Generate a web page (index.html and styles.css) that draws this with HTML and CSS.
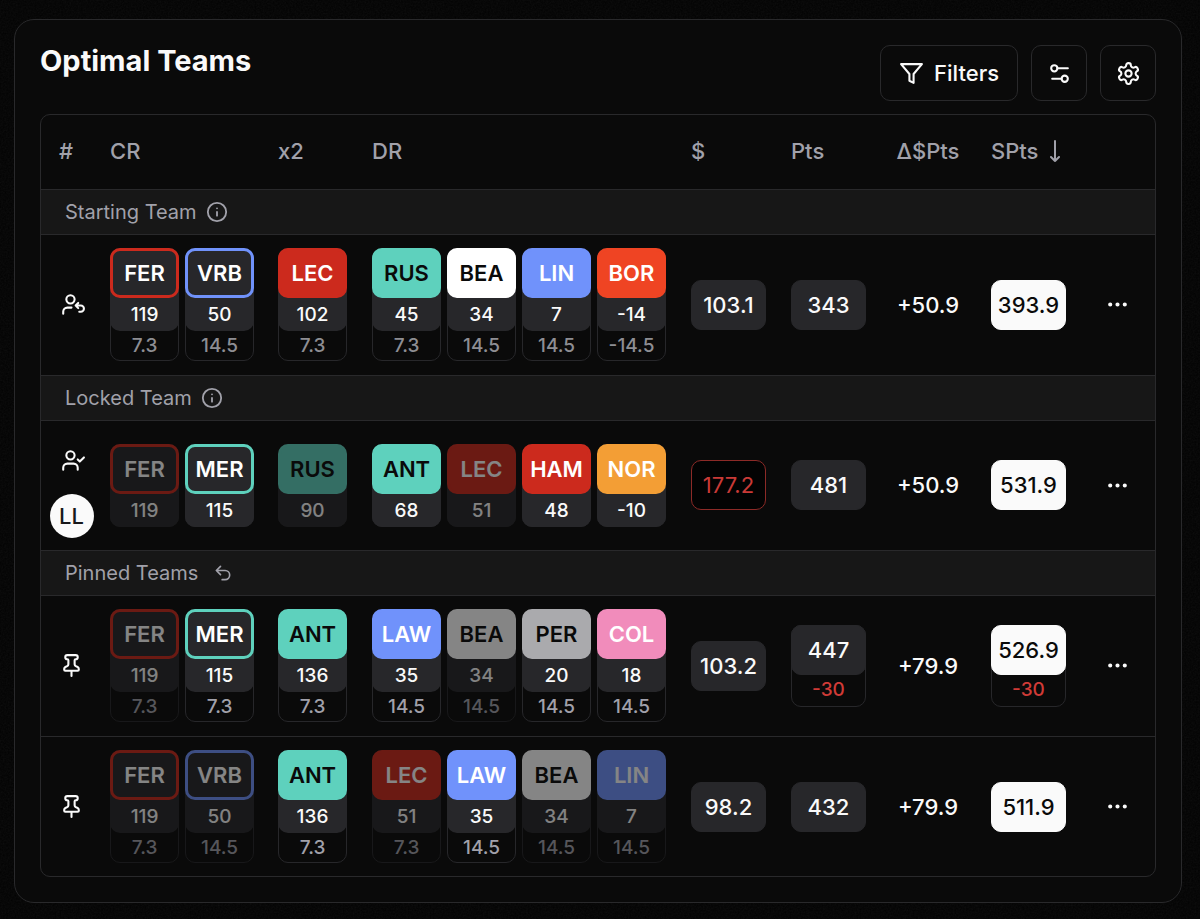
FILE: index.html
```html
<!DOCTYPE html>
<html lang="en">
<head>
    <meta charset="UTF-8">
    <meta name="viewport" content="width=device-width, initial-scale=1.0">
    <title>Optimal Teams</title>
    <link rel="stylesheet" href="styles.css">
</head>
<body>
    <!-- icon set -->
    <svg class="sprite" aria-hidden="true">
        <symbol id="i-filter" viewBox="0 0 24 24"><path d="M22 3H2l8 9.46V19l4 2v-8.54z"/></symbol>
        <symbol id="i-sliders" viewBox="0 0 24 24"><path d="M14 17H5M20 7h-10"/><circle cx="17" cy="17" r="3"/><circle cx="7" cy="7" r="3"/></symbol>
        <symbol id="i-gear" viewBox="0 0 24 24"><path d="M12.22 2h-.44a2 2 0 0 0-2 2v.18a2 2 0 0 1-1 1.73l-.43.25a2 2 0 0 1-2 0l-.15-.08a2 2 0 0 0-2.73.73l-.22.38a2 2 0 0 0 .73 2.73l.15.1a2 2 0 0 1 1 1.72v.51a2 2 0 0 1-1 1.74l-.15.09a2 2 0 0 0-.73 2.73l.22.38a2 2 0 0 0 2.73.73l.15-.08a2 2 0 0 1 2 0l.43.25a2 2 0 0 1 1 1.73V20a2 2 0 0 0 2 2h.44a2 2 0 0 0 2-2v-.18a2 2 0 0 1 1-1.73l.43-.25a2 2 0 0 1 2 0l.15.08a2 2 0 0 0 2.73-.73l.22-.39a2 2 0 0 0-.73-2.73l-.15-.08a2 2 0 0 1-1-1.74v-.5a2 2 0 0 1 1-1.74l.15-.09a2 2 0 0 0 .73-2.73l-.22-.38a2 2 0 0 0-2.73-.73l-.15.08a2 2 0 0 1-2 0l-.43-.25a2 2 0 0 1-1-1.73V4a2 2 0 0 0-2-2z"/><circle cx="12" cy="12" r="3"/></symbol>
        <symbol id="i-info" viewBox="0 0 24 24"><circle cx="12" cy="12" r="10"/><path d="M12 16v-4M12 8h.01"/></symbol>
        <symbol id="i-undo" viewBox="0 0 24 24"><path d="M9 14 4 9l5-5M4 9h10.5a5.5 5.5 0 0 1 0 11H11"/></symbol>
        <symbol id="i-dots" viewBox="0 0 24 24"><circle cx="5" cy="12" r="1"/><circle cx="12" cy="12" r="1"/><circle cx="19" cy="12" r="1"/></symbol>
        <symbol id="i-pin" viewBox="0 0 24 24"><path d="M12 17v5M9 10.76a2 2 0 0 1-1.11 1.79l-1.78.9A2 2 0 0 0 5 15.24V16a1 1 0 0 0 1 1h12a1 1 0 0 0 1-1v-.76a2 2 0 0 0-1.11-1.79l-1.78-.9A2 2 0 0 1 15 10.76V7a1 1 0 0 1 1-1 2 2 0 0 0 0-4H8a2 2 0 0 0 0 4 1 1 0 0 1 1 1z"/></symbol>
        <symbol id="i-user-undo" viewBox="-4 0 28 24"><circle cx="9" cy="7" r="4"/><path d="M2 21v-2a4 4 0 0 1 4-4h4M16.5 10.5 14 13l2.5 2.5M14 13h5a3 3 0 0 1 0 6h-1.5"/></symbol>
        <symbol id="i-user-check" viewBox="-4 0 28 24"><circle cx="9" cy="7" r="4"/><path d="M16 21v-2a4 4 0 0 0-4-4H6a4 4 0 0 0-4 4v2M16 11l2 2 4-4"/></symbol>
        <symbol id="i-down" viewBox="0 0 12 22"><path d="M6 1v20M2 17l4 4 4-4"/></symbol>
    </svg>

    <!-- grain on the page background -->
    <svg class="grain" aria-hidden="true">
        <filter id="noise"><feTurbulence type="fractalNoise" baseFrequency="0.6" numOctaves="2" stitchTiles="stitch"/><feColorMatrix type="saturate" values="0"/></filter>
        <rect width="100%" height="100%" filter="url(#noise)"/>
    </svg>

    <main class="card">
        <header class="card-header">
            <h1>Optimal Teams</h1>
            <div class="actions">
                <button class="btn" type="button"><svg class="icon"><use href="#i-filter"/></svg>Filters</button>
                <button class="btn btn-icon" type="button" aria-label="View options"><svg class="icon"><use href="#i-sliders"/></svg></button>
                <button class="btn btn-icon" type="button" aria-label="Settings"><svg class="icon"><use href="#i-gear"/></svg></button>
            </div>
        </header>

        <div class="table-wrap">
            <table>
                <colgroup>
                    <col class="col-num"><col class="col-cr"><col class="col-x2"><col class="col-dr">
                    <col class="col-stat"><col class="col-stat"><col class="col-stat"><col class="col-stat"><col>
                </colgroup>
                <thead>
                    <tr>
                        <th class="num">#</th>
                        <th>CR</th>
                        <th>x2</th>
                        <th>DR</th>
                        <th>$</th>
                        <th>Pts</th>
                        <th class="center">Δ$Pts</th>
                        <th><span class="sort">SPts <svg class="sort-icon"><use href="#i-down"/></svg></span></th>
                        <th></th>
                    </tr>
                </thead>
                <tbody>
                    <tr class="section">
                        <td colspan="9"><div class="section-label">Starting Team <svg class="info"><use href="#i-info"/></svg></div></td>
                    </tr>
                    <tr class="starting">
                        <td class="who"><div class="who-box"><svg class="icon icon-user"><use href="#i-user-undo"/></svg></div></td>
                        <td>
                            <div class="chips">
                                <div class="chip constructor ferrari"><b>FER</b><span>119</span><small>7.3</small></div>
                                <div class="chip constructor rb"><b>VRB</b><span>50</span><small>14.5</small></div>
                            </div>
                        </td>
                        <td>
                            <div class="chips">
                                <div class="chip ferrari"><b>LEC</b><span>102</span><small>7.3</small></div>
                            </div>
                        </td>
                        <td>
                            <div class="chips">
                                <div class="chip mercedes"><b>RUS</b><span>45</span><small>7.3</small></div>
                                <div class="chip haas"><b>BEA</b><span>34</span><small>14.5</small></div>
                                <div class="chip rb"><b>LIN</b><span>7</span><small>14.5</small></div>
                                <div class="chip audi"><b>BOR</b><span>-14</span><small>-14.5</small></div>
                            </div>
                        </td>
                        <td><div class="stat">103.1</div></td>
                        <td><div class="stat">343</div></td>
                        <td class="center">+50.9</td>
                        <td><div class="stat stat-main">393.9</div></td>
                        <td class="menu"><button class="more" type="button" aria-label="More"><svg class="icon"><use href="#i-dots"/></svg></button></td>
                    </tr>

                    <tr class="section">
                        <td colspan="9"><div class="section-label">Locked Team <svg class="info"><use href="#i-info"/></svg></div></td>
                    </tr>
                    <tr class="locked">
                        <td class="who">
                            <div class="who-box">
                                <svg class="icon icon-user"><use href="#i-user-check"/></svg>
                                <span class="avatar">LL</span>
                            </div>
                        </td>
                        <td>
                            <div class="chips">
                                <div class="chip constructor ferrari dim"><b>FER</b><span>119</span></div>
                                <div class="chip constructor mercedes"><b>MER</b><span>115</span></div>
                            </div>
                        </td>
                        <td>
                            <div class="chips">
                                <div class="chip mercedes dim"><b>RUS</b><span>90</span></div>
                            </div>
                        </td>
                        <td>
                            <div class="chips">
                                <div class="chip mercedes"><b>ANT</b><span>68</span></div>
                                <div class="chip ferrari dim"><b>LEC</b><span>51</span></div>
                                <div class="chip ferrari"><b>HAM</b><span>48</span></div>
                                <div class="chip mclaren"><b>NOR</b><span>-10</span></div>
                            </div>
                        </td>
                        <td><div class="stat stat-over">177.2</div></td>
                        <td><div class="stat">481</div></td>
                        <td class="center">+50.9</td>
                        <td><div class="stat stat-main">531.9</div></td>
                        <td class="menu"><button class="more" type="button" aria-label="More"><svg class="icon"><use href="#i-dots"/></svg></button></td>
                    </tr>

                    <tr class="section">
                        <td colspan="9"><div class="section-label">Pinned Teams <button class="undo" type="button" aria-label="Undo"><svg><use href="#i-undo"/></svg></button></div></td>
                    </tr>
                    <tr>
                        <td class="who"><div class="who-box"><svg class="icon"><use href="#i-pin"/></svg></div></td>
                        <td>
                            <div class="chips">
                                <div class="chip constructor ferrari dim"><b>FER</b><span>119</span><small>7.3</small></div>
                                <div class="chip constructor mercedes"><b>MER</b><span>115</span><small>7.3</small></div>
                            </div>
                        </td>
                        <td>
                            <div class="chips">
                                <div class="chip mercedes"><b>ANT</b><span>136</span><small>7.3</small></div>
                            </div>
                        </td>
                        <td>
                            <div class="chips">
                                <div class="chip rb"><b>LAW</b><span>35</span><small>14.5</small></div>
                                <div class="chip haas dim"><b>BEA</b><span>34</span><small>14.5</small></div>
                                <div class="chip cadillac"><b>PER</b><span>20</span><small>14.5</small></div>
                                <div class="chip alpine"><b>COL</b><span>18</span><small>14.5</small></div>
                            </div>
                        </td>
                        <td><div class="stat">103.2</div></td>
                        <td><div class="penalty"><div class="stat">447</div><small>-30</small></div></td>
                        <td class="center">+79.9</td>
                        <td><div class="penalty"><div class="stat stat-main">526.9</div><small>-30</small></div></td>
                        <td class="menu"><button class="more" type="button" aria-label="More"><svg class="icon"><use href="#i-dots"/></svg></button></td>
                    </tr>
                    <tr>
                        <td class="who"><div class="who-box"><svg class="icon"><use href="#i-pin"/></svg></div></td>
                        <td>
                            <div class="chips">
                                <div class="chip constructor ferrari dim"><b>FER</b><span>119</span><small>7.3</small></div>
                                <div class="chip constructor rb dim"><b>VRB</b><span>50</span><small>14.5</small></div>
                            </div>
                        </td>
                        <td>
                            <div class="chips">
                                <div class="chip mercedes"><b>ANT</b><span>136</span><small>7.3</small></div>
                            </div>
                        </td>
                        <td>
                            <div class="chips">
                                <div class="chip ferrari dim"><b>LEC</b><span>51</span><small>7.3</small></div>
                                <div class="chip rb"><b>LAW</b><span>35</span><small>14.5</small></div>
                                <div class="chip haas dim"><b>BEA</b><span>34</span><small>14.5</small></div>
                                <div class="chip rb dim"><b>LIN</b><span>7</span><small>14.5</small></div>
                            </div>
                        </td>
                        <td><div class="stat">98.2</div></td>
                        <td><div class="stat">432</div></td>
                        <td class="center">+79.9</td>
                        <td><div class="stat stat-main">511.9</div></td>
                        <td class="menu"><button class="more" type="button" aria-label="More"><svg class="icon"><use href="#i-dots"/></svg></button></td>
                    </tr>
                </tbody>
            </table>
        </div>
    </main>
</body>
</html>
```
FILE: styles.css
```css
* {
    box-sizing: border-box;
}

body {
    margin: 0;
    padding: 19px 18px 16px 14px;
    background: #030303;
    color: #fafafa;
    font-family: Inter, "Liberation Sans", sans-serif;
    font-size: 22px;
    font-weight: 500;
    line-height: 32px;
}

button {
    font: inherit;
    color: inherit;
    background: none;
    border: 0;
    padding: 0;
    cursor: pointer;
}

svg {
    display: block;
    fill: none;
    stroke: currentColor;
    stroke-width: 2;
    stroke-linecap: round;
    stroke-linejoin: round;
    flex-shrink: 0;
}

.sprite {
    position: absolute;
    width: 0;
    height: 0;
}

.grain {
    position: fixed;
    top: 0;
    left: 0;
    width: 100%;
    height: 100%;
    opacity: 0.06;
    z-index: -1;
}

.icon {
    width: 25px;
    height: 25px;
}

.icon-user {
    width: 29px;
}

.card {
    background: #0a0a0a;
    border: 1px solid #29292b;
    border-radius: 20px;
    padding: 25px;
}

.card-header {
    display: flex;
    justify-content: space-between;
    align-items: flex-start;
    margin-bottom: 13px;
}

h1 {
    margin: 0;
    font-size: 29px;
    font-weight: 700;
    line-height: 32px;
}

.actions {
    display: flex;
    gap: 13px;
}

.btn {
    display: flex;
    align-items: center;
    justify-content: center;
    gap: 10px;
    height: 56px;
    padding: 0 18px;
    border: 1px solid #29292b;
    border-radius: 10px;
}

.btn-icon {
    width: 56px;
    padding: 0;
}

/* table */
.table-wrap {
    border: 1px solid #29292b;
    border-radius: 10px;
    overflow-x: auto;
}

table {
    width: 100%;
    table-layout: fixed;
    border-collapse: separate;
    border-spacing: 0;
}

.col-num { width: 57px; }
.col-cr { width: 168px; }
.col-x2 { width: 94px; }
.col-dr { width: 319px; }
.col-stat { width: 100px; }

th {
    height: 75px;
    padding: 0 12px 2px;
    text-align: left;
    font-weight: 500;
    color: #a1a1aa;
    border-bottom: 1px solid #29292b;
}

th.num {
    padding-left: 18px;
}

td {
    padding: 13px 12px 14px;
    border-bottom: 1px solid #29292b;
}

tr:last-child td {
    padding-bottom: 13px;
    border-bottom: 0;
}

.center {
    padding-left: 6px;
    padding-right: 8px;
    text-align: center;
}

.section td {
    height: 45px;
    padding: 0 24px;
    background: #171717;
    color: #a1a1aa;
    font-size: 20px;
    font-weight: 400;
}

.section-label {
    display: flex;
    align-items: center;
    gap: 9px;
}

.info {
    width: 22px;
    height: 22px;
}

.undo {
    padding: 0 6px;
}

.undo svg {
    width: 20px;
    height: 20px;
}

.sort {
    display: flex;
    align-items: center;
    gap: 11px;
}

.sort-icon {
    width: 12px;
    height: 22px;
}

td.who {
    padding-left: 6px;
    padding-right: 2px;
}

.who-box {
    display: flex;
    flex-direction: column;
    align-items: center;
    gap: 21px;
}

.locked td {
    height: 130px;
}

.locked td.who {
    padding-top: 20px;
    padding-bottom: 6px;
}

.avatar {
    width: 44px;
    border-radius: 50%;
    background: #fafafa;
    color: #18181b;
    line-height: 44px;
    text-align: center;
}

td.menu {
    padding-left: 0;
    padding-right: 0;
}

.more {
    display: block;
    margin: 0 auto;
}

/* driver and constructor chips */
.chips {
    display: flex;
    gap: 6px;
}

.chip {
    --team: #fff;
    --ink: #fff;
    width: 69px;
    border-radius: 10px;
    border: 1px solid #27272a;
    text-align: center;
    font-size: 19px;
}

.chip b {
    display: block;
    position: relative;
    height: 50px;
    margin: -1px -1px 0;
    border: 3px solid var(--team);
    border-radius: 10px;
    background: var(--team);
    color: var(--ink);
    font-size: 22px;
    font-weight: 600;
    line-height: 44px;
}

.chip span {
    display: block;
    margin: -10px -1px 0;
    padding: 11px 0 0;
    border-radius: 0 0 10px 10px;
    background: #27272a;
}

.chip span:last-child {
    margin-bottom: -1px;
}

.chip small {
    display: block;
    font-size: 19px;
    line-height: 29px;
    color: #a1a1aa;
}

.starting small {
    color: #8e8e93;
}

.chip.constructor b {
    background: #27272a;
    color: #fff;
}

.dim {
    opacity: 0.5;
}

.chip.ferrari { --team: #cc2a1d; }
.chip.rb { --team: #7092fb; }
.chip.mercedes { --team: #5ed1bd; --ink: #0a0a0a; }
.chip.haas { --team: #fff; --ink: #0a0a0a; }
.chip.audi { --team: #ef4423; }
.chip.mclaren { --team: #f39e35; }
.chip.cadillac { --team: #aaaaad; --ink: #0a0a0a; }
.chip.alpine { --team: #f18cbb; }

/* stats */
.stat {
    width: 75px;
    height: 50px;
    border: 1px solid #27272a;
    border-radius: 10px;
    background: #27272a;
    line-height: 48px;
    text-align: center;
}

.stat-main {
    background: #fafafa;
    border-color: #fafafa;
    color: #0a0a0a;
}

.stat-over {
    background: #030303;
    border-color: #8c2a27;
    color: #c93a37;
    font-weight: 400;
}

.penalty {
    width: 75px;
    border: 1px solid #27272a;
    border-radius: 10px;
    text-align: center;
}

.penalty .stat {
    margin: -1px;
}

.penalty small {
    display: block;
    font-size: 19px;
    line-height: 32px;
    color: #d03b37;
}
```
